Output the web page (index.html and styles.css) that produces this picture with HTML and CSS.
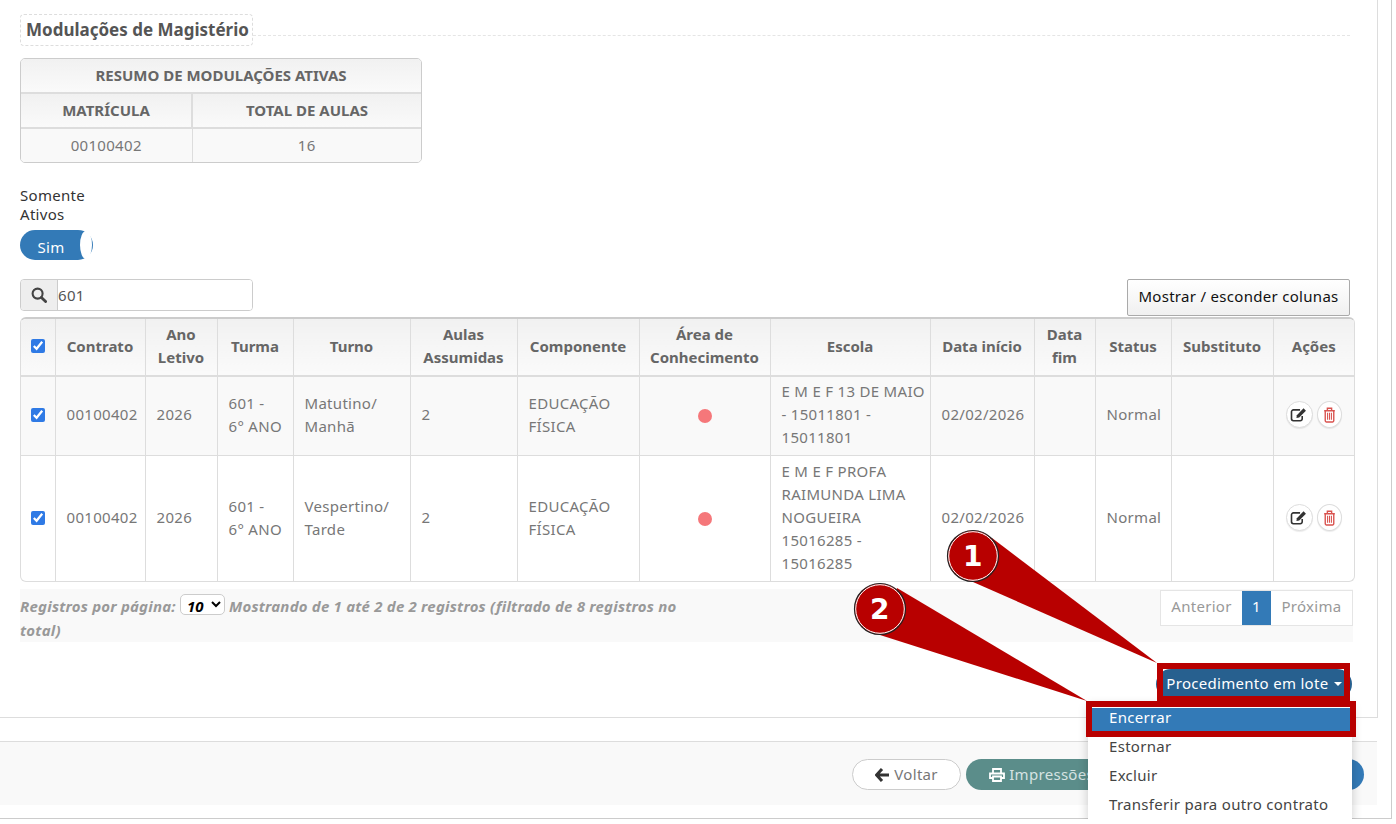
FILE: index.html
```html
<!DOCTYPE html>
<html lang="pt-BR">
<head>
    <meta charset="UTF-8">
    <title>Modulações de Magistério</title>
    <link rel="stylesheet" href="styles.css">
</head>
<body>
<div class="page">
    <div class="panel">
        <div class="section-head">
            <h4 class="section-title">Modulações de Magistério</h4>
            <div class="section-rule"></div>
        </div>

        <div class="summary">
            <table>
                <colgroup><col class="sum-a"><col></colgroup>
                <tr><th colspan="2">RESUMO DE MODULAÇÕES ATIVAS</th></tr>
                <tr><th>MATRÍCULA</th><th>TOTAL DE AULAS</th></tr>
                <tr><td>00100402</td><td>16</td></tr>
            </table>
        </div>

        <label class="toggle-label">Somente<br>Ativos</label>
        <div class="toggle"><span class="toggle-text">Sim</span><span class="toggle-knob"></span></div>

        <div class="tools">
            <div class="search">
                <span class="search-icon">
                    <svg width="16" height="16" viewBox="0 0 16 16"><circle cx="6.6" cy="6.6" r="5" fill="none" stroke="#444" stroke-width="2.1"/><path d="M10.4 10.4L14.6 14.6" stroke="#444" stroke-width="2.8" stroke-linecap="round"/></svg>
                </span>
                <input class="search-input" type="text" value="601">
            </div>
            <button class="btn-cols">Mostrar / esconder colunas</button>
        </div>

        <div class="grid-wrap">
            <table class="grid">
                <colgroup>
                    <col class="c1"><col class="c2"><col class="c3"><col class="c4"><col class="c5"><col class="c6"><col class="c7">
                    <col class="c8"><col class="c9"><col class="c10"><col class="c11"><col class="c12"><col class="c13"><col class="c14">
                </colgroup>
                <thead>
                    <tr>
                        <th><input class="check" type="checkbox" checked></th>
                        <th>Contrato</th>
                        <th>Ano<br>Letivo</th>
                        <th>Turma</th>
                        <th>Turno</th>
                        <th>Aulas<br>Assumidas</th>
                        <th>Componente</th>
                        <th>Área de<br>Conhecimento</th>
                        <th>Escola</th>
                        <th>Data início</th>
                        <th>Data<br>fim</th>
                        <th>Status</th>
                        <th>Substituto</th>
                        <th>Ações</th>
                    </tr>
                </thead>
                <tbody>
                    <tr class="odd">
                        <td class="mid"><input class="check" type="checkbox" checked></td>
                        <td>00100402</td>
                        <td>2026</td>
                        <td>601 -<br>6° ANO</td>
                        <td>Matutino/<br>Manhã</td>
                        <td>2</td>
                        <td>EDUCAÇÃO<br>FÍSICA</td>
                        <td class="mid"><span class="dot"></span></td>
                        <td>E M E F 13 DE MAIO<br>- 15011801 -<br>15011801</td>
                        <td>02/02/2026</td>
                        <td></td>
                        <td>Normal</td>
                        <td></td>
                        <td class="mid">
                            <div class="actions">
                                <span class="act act-edit"><svg width="18" height="15" viewBox="0 0 16 14"><path d="M11 8.5V11a1.8 1.8 0 0 1-1.800 1.800H2.800A1.800 1.800 0 0 1 1 11V4.500A1.800 1.800 0 0 1 2.800 2.700H9" fill="none" stroke="#333" stroke-width="1.500"/><path d="M6 7.600L12.200 1.200l2.300 2.300L8.200 9.800 5.600 10.300z" fill="#333"/></svg></span>
                                <span class="act act-del"><svg width="13" height="16" viewBox="0 0 12 15"><path d="M1 3.500H11M4 3V1.200H8V3M2 3.500V13a1 1 0 0 0 1 1H9a1 1 0 0 0 1-1V3.500" fill="none" stroke="#d9534f" stroke-width="1.300"/><path d="M4.200 5.500V12M6 5.500V12M7.800 5.500V12" stroke="#d9534f"/></svg></span>
                            </div>
                        </td>
                    </tr>
                    <tr>
                        <td class="mid"><input class="check" type="checkbox" checked></td>
                        <td>00100402</td>
                        <td>2026</td>
                        <td>601 -<br>6° ANO</td>
                        <td>Vespertino/<br>Tarde</td>
                        <td>2</td>
                        <td>EDUCAÇÃO<br>FÍSICA</td>
                        <td class="mid"><span class="dot"></span></td>
                        <td>E M E F PROFA<br>RAIMUNDA LIMA<br>NOGUEIRA<br>15016285 -<br>15016285</td>
                        <td>02/02/2026</td>
                        <td></td>
                        <td>Normal</td>
                        <td></td>
                        <td class="mid">
                            <div class="actions">
                                <span class="act act-edit"><svg width="18" height="15" viewBox="0 0 16 14"><path d="M11 8.5V11a1.8 1.8 0 0 1-1.800 1.800H2.800A1.800 1.800 0 0 1 1 11V4.500A1.800 1.800 0 0 1 2.800 2.700H9" fill="none" stroke="#333" stroke-width="1.500"/><path d="M6 7.600L12.200 1.200l2.300 2.300L8.200 9.800 5.600 10.300z" fill="#333"/></svg></span>
                                <span class="act act-del"><svg width="13" height="16" viewBox="0 0 12 15"><path d="M1 3.500H11M4 3V1.200H8V3M2 3.500V13a1 1 0 0 0 1 1H9a1 1 0 0 0 1-1V3.500" fill="none" stroke="#d9534f" stroke-width="1.300"/><path d="M4.200 5.500V12M6 5.500V12M7.800 5.500V12" stroke="#d9534f"/></svg></span>
                            </div>
                        </td>
                    </tr>
                </tbody>
            </table>
        </div>

        <div class="grid-foot">
            <div class="info">
                Registros por página:
                <select class="per-page"><option>10</option></select>
                Mostrando de 1 até 2 de 2 registros (filtrado de 8 registros no<br>total)
            </div>
            <div class="pager">
                <span class="pg">Anterior</span>
                <span class="pg pg-on">1</span>
                <span class="pg">Próxima</span>
            </div>
        </div>

        <div class="batch">
            <button class="btn-batch">Procedimento em lote <span class="caret"></span></button>
            <ul class="menu">
                <li class="menu-on">Encerrar</li>
                <li>Estornar</li>
                <li>Excluir</li>
                <li>Transferir para outro contrato</li>
            </ul>
        </div>
    </div>

    <div class="actions-bar">
        <button class="btn btn-back">
            <svg width="15" height="14" viewBox="0 0 15 14"><path d="M7 1L1.500 7 7 13M2 7H14" fill="none" stroke="#333" stroke-width="3"/></svg>
            Voltar
        </button>
        <button class="btn btn-print">
            <svg width="16" height="14" viewBox="0 0 16 14"><path d="M4 5V1h8v4M4 10H1V5.500h14V10h-3M4 8.500h8V13H4z" fill="none" stroke="#fff" stroke-width="1.800"/></svg>
            Impressões
        </button>
        <button class="btn btn-save">Salvar</button>
    </div>
</div>

<svg class="marks" width="1396" height="824" viewBox="0 0 1396 824">
    <path d="M992 538L1157 663 973 582z" fill="#b80000"/>
    <path d="M897 588L1087 701 880 635z" fill="#b80000"/>
    <rect x="1160" y="666" width="187" height="33" fill="none" stroke="#b80000" stroke-width="6"/>
    <rect x="1089" y="704" width="264" height="30" fill="none" stroke="#b80000" stroke-width="6"/>
    <circle cx="973" cy="556" r="25.500" fill="#b80000" stroke="#222" stroke-width="1.200"/>
    <circle cx="973" cy="556" r="24.300" fill="none" stroke="#fff" stroke-width="1"/>
    <circle cx="880" cy="609" r="25.500" fill="#b80000" stroke="#222" stroke-width="1.200"/>
    <circle cx="880" cy="609" r="24.300" fill="none" stroke="#fff" stroke-width="1"/>
    <text class="mark-num" x="973" y="566">1</text>
    <text class="mark-num" x="880" y="619">2</text>
</svg>
</body>
</html>
```

FILE: styles.css
```css
* {
    box-sizing: border-box;
}
body {
    margin: 0;
    background: #fff;
    font-family: "Noto Sans", Arial, sans-serif;
    font-size: 15px;
    letter-spacing: 0.3px;
    line-height: 23px;
    color: #777;
    overflow: hidden;
}
.page {
    width: 1392px;
    height: 819px;
    border-right: 1px solid #ccc;
    border-bottom: 1px solid #ccc;
}
.panel {
    width: 1378px;
    height: 718px;
    padding: 14px 22px 0 20px;
    border-right: 1px solid #ddd;
    border-bottom: 1px solid #ddd;
}
.section-head {
    display: flex;
    align-items: flex-start;
    padding-right: 5px;
}
.section-title {
    margin: 0;
    width: 233px;
    height: 32px;
    padding: 0 5px;
    border: 1px dashed #ddd;
    border-radius: 4px;
    font-size: 17px;
    letter-spacing: 0;
    line-height: 29px;
    font-weight: 700;
    white-space: nowrap;
    color: #555;
}
.section-rule {
    flex: 1;
    height: 22px;
    border-bottom: 1px dashed #e5e5e5;
}
.summary {
    width: 402px;
    margin-top: 12px;
    border: 1px solid #ccc;
    border-radius: 5px;
    overflow: hidden;
}
.summary table {
    width: 100%;
    border-collapse: collapse;
    table-layout: fixed;
}
.sum-a {
    width: 171px;
}
.summary th {
    height: 35px;
    padding: 0;
    font-weight: 700;
    letter-spacing: 0;
    color: #666;
    background: linear-gradient(#f1f1f1, #fafafa);
    border-bottom: 2px solid #ddd;
    border-left: 2px solid #ddd;
}
.summary th[colspan] {
    height: 34px;
}
.summary th[colspan], .summary th:first-child {
    border-left: 0;
}
.summary td {
    height: 34px;
    padding: 0;
    text-align: center;
    background: #f9f9f9;
    border-left: 1px solid #ddd;
}
.summary td:first-child {
    border-left: 0;
}
.toggle-label {
    display: block;
    margin-top: 23px;
    line-height: 19px;
    color: #333;
}
.toggle {
    position: relative;
    width: 73px;
    height: 30px;
    margin-top: 6px;
    border-radius: 15px;
    background: #337ab7;
    color: #fff;
}
.toggle-text {
    display: block;
    width: 62px;
    text-align: center;
    line-height: 34px;
}
.toggle-knob {
    position: absolute;
    top: 1px;
    right: 1px;
    width: 12px;
    height: 28px;
    border-radius: 50%;
    background: #fff;
}
.tools {
    display: flex;
    justify-content: space-between;
    align-items: flex-start;
    margin-top: 19px;
    padding-right: 5px;
}
.search {
    display: flex;
    width: 233px;
    height: 32px;
    border: 1px solid #ccc;
    border-radius: 4px;
    overflow: hidden;
}
.search-icon {
    display: flex;
    align-items: center;
    justify-content: center;
    width: 37px;
    background: #eee;
    border-right: 1px solid #ccc;
}
.search-input {
    flex: 1;
    min-width: 0;
    padding: 0;
    border: 0;
    outline: 0;
    font: inherit;
    letter-spacing: inherit;
    color: #555;
}
.btn-cols {
    width: 223px;
    height: 37px;
    padding: 0 0 2px;
    border: 1px solid #aaa;
    border-radius: 2px;
    background: linear-gradient(#fff, #f0f0f0);
    font: inherit;
    letter-spacing: inherit;
    color: #111;
    white-space: nowrap;
}
.grid-wrap {
    margin-top: 1px;
    border: 1px solid #ddd;
    border-top: 2px solid #ccc;
    border-radius: 6px;
    overflow: hidden;
}
.grid {
    width: 100%;
    border-collapse: collapse;
    table-layout: fixed;
}
.c1 { width: 34px; }
.c2 { width: 90px; }
.c3 { width: 72px; }
.c4 { width: 76px; }
.c5 { width: 117px; }
.c6 { width: 107px; }
.c7 { width: 122px; }
.c8 { width: 131px; }
.c9 { width: 160px; }
.c10 { width: 104px; }
.c11 { width: 61px; }
.c12 { width: 76px; }
.c13 { width: 102px; }
.c14 { width: 81px; }
.grid th {
    padding: 4px 0 6px;
    font-weight: 700;
    letter-spacing: 0;
    text-align: center;
    color: #666;
    background: linear-gradient(#f1f1f1, #fafafa);
    border-left: 1px solid #ddd;
    border-bottom: 2px solid #ddd;
}
.grid td {
    padding: 4px 0 6px 11px;
    white-space: nowrap;
    border-left: 1px solid #ddd;
    border-top: 1px solid #ddd;
}
.grid th:first-child, .grid td:first-child {
    border-left: 0;
}
.grid tr:first-child td {
    border-top: 0;
}
.grid .mid {
    padding-left: 0;
    text-align: center;
}
.grid .odd td {
    padding-top: 3px;
    padding-bottom: 6px;
    background: #f9f9f9;
}
.check {
    display: block;
    width: 14px;
    height: 14px;
    margin: 0 auto;
    accent-color: #2f7ae5;
}
.dot {
    display: inline-block;
    width: 14px;
    height: 14px;
    border-radius: 50%;
    background: #f5777a;
    vertical-align: middle;
}
.actions {
    display: flex;
    justify-content: center;
    gap: 4px;
}
.act {
    display: flex;
    align-items: center;
    justify-content: center;
    height: 27px;
    border: 1px solid #ddd;
    border-radius: 50%;
    background: #fff;
    box-shadow: 0 1px 1px rgba(0, 0, 0, 0.08);
}
.act-edit {
    width: 27px;
}
.act-del {
    width: 25px;
}
.grid-foot {
    display: flex;
    justify-content: space-between;
    height: 53px;
    margin: 7px 2px 0 0;
    background: #f9f9f9;
}
.info {
    width: 660px;
    padding-top: 5px;
    line-height: 24px;
    font-weight: 700;
    font-style: italic;
    letter-spacing: 0.2px;
    color: #999;
    white-space: nowrap;
}
.per-page {
    width: 45px;
    height: 21px;
    padding: 0 2px;
    border: 1px solid #ccc;
    border-radius: 5px;
    background: #fff;
    font: inherit;
    color: #000;
}
.pager {
    display: flex;
    height: 36px;
    margin-top: 1px;
    border: 1px solid #e5e5e5;
    background: #fff;
}
.pg {
    width: 81px;
    line-height: 31px;
    text-align: center;
    color: #999;
}
.pg-on {
    width: 29px;
    color: #fff;
    background: #337ab7;
}
.batch {
    position: relative;
    display: flex;
    justify-content: flex-end;
    margin: 27px 3px 0 0;
}
.btn-batch {
    width: 196px;
    height: 30px;
    padding: 0 0 2px;
    border: 0;
    border-radius: 15px;
    background: #27608f;
    color: #fff;
    font: inherit;
    letter-spacing: inherit;
    white-space: nowrap;
}
.caret {
    display: inline-block;
    margin-left: 1px;
    border-top: 4px solid #fff;
    border-left: 4px solid transparent;
    border-right: 4px solid transparent;
    vertical-align: middle;
}
.menu {
    position: absolute;
    z-index: 2;
    top: 34px;
    right: 0;
    width: 264px;
    height: 118px;
    margin: 0;
    padding: 5px 0 0;
    list-style: none;
    background: #fff;
    box-shadow: 0 3px 10px rgba(0, 0, 0, 0.2);
}
.menu li {
    height: 29px;
    padding-left: 21px;
    line-height: 27px;
    color: #444;
    white-space: nowrap;
}
.menu .menu-on {
    height: 24px;
    margin-bottom: 1px;
    line-height: 19px;
    color: #fff;
    background: #337ab7;
}
.actions-bar {
    display: flex;
    justify-content: flex-end;
    gap: 5px;
    width: 1377px;
    height: 64px;
    margin-top: 23px;
    padding: 17px 13px 0 0;
    border-top: 1px solid #ddd;
    background: #f9f9f9;
}
.btn {
    height: 31px;
    padding: 0;
    border-radius: 16px;
    font: inherit;
    letter-spacing: inherit;
    white-space: nowrap;
}
.btn svg {
    vertical-align: -2px;
}
.btn-back {
    width: 109px;
    border: 1px solid #ccc;
    background: #fff;
    color: #777;
}
.btn-print {
    width: 150px;
    border: 0;
    background: #5b8d8a;
    color: #d5e3e2;
    text-align: left;
    padding-left: 23px;
}
.btn-save {
    width: 243px;
    border: 0;
    background: #337ab7;
    color: #fff;
}
.marks {
    position: absolute;
    z-index: 5;
    top: 0;
    left: 0;
}
.mark-num {
    font-family: "DejaVu Sans", sans-serif;
    font-size: 28px;
    font-weight: 700;
    fill: #fff;
    text-anchor: middle;
}
```
